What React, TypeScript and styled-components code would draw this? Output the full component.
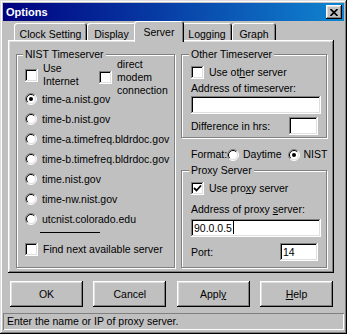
import React from "react";
import styled, { createGlobalStyle } from "styled-components";

const Global = createGlobalStyle`
  body {
    margin: 0;
    background: #c0c0c0;
  }
`;

const raised = `
  box-shadow: inset -1px -1px #000, inset 1px 1px #fff, inset -2px -2px #808080, inset 2px 2px #dfdfdf;
`;

const sunken = `
  box-shadow: inset -1px -1px #fff, inset 1px 1px #808080, inset -2px -2px #dfdfdf, inset 2px 2px #000;
`;

const Window = styled.div`
  width: 347px;
  height: 334px;
  box-sizing: border-box;
  padding: 3px;
  background: #c0c0c0;
  box-shadow: inset -1px -1px #000, inset 1px 1px #dfdfdf, inset -2px -2px #808080, inset 2px 2px #fff;
  display: flex;
  flex-direction: column;
  font: 10.5px "Liberation Sans", Arial, sans-serif;
  color: #000;
`;

const TitleBar = styled.div`
  height: 18px;
  display: flex;
  align-items: center;
  justify-content: space-between;
  padding: 0 2px 0 3px;
  background: linear-gradient(90deg, #000080, #1084d0);
  color: #fff;
  font-weight: bold;
  font-size: 11px;
`;

const CloseButton = styled.div`
  width: 16px;
  height: 14px;
  background: #c0c0c0;
  ${raised}
  display: flex;
  align-items: center;
  justify-content: center;
`;

const TabStrip = styled.div`
  height: 19px;
  display: flex;
  align-items: flex-end;
  padding-left: 11px;
`;

const Tab = styled.div<{ $w: number; $active?: boolean }>`
  position: relative;
  z-index: ${(p) => (p.$active ? 1 : 0)};
  box-sizing: border-box;
  width: ${(p) => (p.$active ? p.$w + 4 : p.$w)}px;
  height: ${(p) => (p.$active ? 21 : 17)}px;
  margin: ${(p) => (p.$active ? "0 -2px -2px" : "0")};
  padding-top: 5px;
  line-height: 12px;
  text-align: center;
  background: #c0c0c0;
  border-radius: 3px 3px 0 0;
  box-shadow: inset 1px 1px #fff, inset -1px 0 #000, inset -2px 0 #808080;
`;

const Panel = styled.div`
  width: 326px;
  height: 233px;
  box-sizing: border-box;
  margin-left: 5px;
  padding: 8px 7px 5px 8px;
  ${raised}
  display: grid;
  grid-template-columns: 159px 146px;
  column-gap: 6px;
`;

const Group = styled.fieldset<{ $h?: number; $pl: number }>`
  margin: 0;
  min-width: 0;
  box-sizing: border-box;
  height: ${(p) => (p.$h ? `${p.$h}px` : "auto")};
  border: 1px solid #808080;
  box-shadow: inset 1px 1px #fff, 1px 1px #fff;
  padding: 0 4px 0 ${(p) => p.$pl}px;
  display: flex;
  flex-direction: column;
`;

const Legend = styled.legend`
  margin-left: -2px;
  padding: 0 2px;
  line-height: 12px;
  background: #c0c0c0;
`;

const Column = styled.div`
  display: flex;
  flex-direction: column;
`;

const TopOptions = styled.div`
  height: 31px;
  margin-top: -2px;
  display: grid;
  grid-template-columns: 74px auto;
  align-items: start;
`;

const Check = styled.div<{ $top?: number }>`
  display: flex;
  align-items: center;
  gap: 5px;
  line-height: 13px;
  margin-top: ${(p) => p.$top ?? 0}px;
  white-space: nowrap;
`;

const Box = styled.span`
  width: 13px;
  height: 13px;
  flex: none;
  background: #fff;
  ${sunken}
  display: flex;
  align-items: center;
  justify-content: center;
`;

const RadioRow = styled.div`
  height: 20px;
  display: flex;
  align-items: center;
  gap: 5px;
  white-space: nowrap;
`;

const Rule = styled.div`
  width: 60px;
  height: 1px;
  margin: 3px 0 0 15px;
  background: #000;
`;

const Text = styled.div<{ $top?: number }>`
  line-height: 13px;
  margin-top: ${(p) => p.$top ?? 0}px;
  white-space: nowrap;
`;

const Field = styled.div<{ $w: number; $top?: number; $right?: number }>`
  width: ${(p) => p.$w}px;
  height: 18px;
  flex: none;
  box-sizing: border-box;
  margin-top: ${(p) => p.$top ?? 0}px;
  margin-right: ${(p) => p.$right ?? 0}px;
  padding-left: 3px;
  line-height: 18px;
  background: #fff;
  ${sunken}
`;

const Caret = styled.span`
  display: inline-block;
  width: 1px;
  height: 13px;
  margin-left: 1px;
  vertical-align: -2px;
  background: #000;
`;

const FieldRow = styled.div<{ $top: number }>`
  margin-top: ${(p) => p.$top}px;
  display: flex;
  align-items: center;
  justify-content: space-between;
  line-height: 13px;
`;

const FormatRow = styled.div`
  margin-top: 10px;
  padding-left: 10px;
  display: flex;
  align-items: center;
  line-height: 13px;
`;

const FormatLabel = styled.span`
  width: 36px;
`;

const Option = styled.span<{ $gap?: number }>`
  display: flex;
  align-items: center;
  gap: 4px;
  margin-left: ${(p) => p.$gap ?? 0}px;
`;

const ButtonRow = styled.div`
  margin: 8px 11px 0 7px;
  display: flex;
  justify-content: space-between;
`;

const Button = styled.button`
  width: 73px;
  height: 26px;
  padding: 0;
  border: none;
  background: #c0c0c0;
  ${raised}
  font: inherit;
  color: #000;
`;

const StatusBar = styled.div`
  margin-top: 6px;
  height: 17px;
  box-sizing: border-box;
  padding-left: 4px;
  line-height: 17px;
  box-shadow: inset 1px 1px #808080, inset -1px -1px #fff;
`;

const CheckBox = ({ checked }: { checked?: boolean }) => (
  <Box>
    {checked && (
      <svg width="9" height="9" viewBox="0 0 9 9">
        <polyline points="1,4 3.5,6.5 8,1.5" fill="none" stroke="#000" strokeWidth="1.8" />
      </svg>
    )}
  </Box>
);

const Radio = ({ checked }: { checked?: boolean }) => (
  <svg width="12" height="12" viewBox="0 0 12 12" style={{ flex: "none" }}>
    <circle cx="6" cy="6" r="5" fill="#fff" />
    <path d="M9.9 2.1 A5.5 5.5 0 0 0 2.1 9.9" fill="none" stroke="#808080" />
    <path d="M9.2 2.8 A4.5 4.5 0 0 0 2.8 9.2" fill="none" stroke="#000" />
    <path d="M9.9 2.1 A5.5 5.5 0 0 1 2.1 9.9" fill="none" stroke="#fff" />
    <path d="M9.2 2.8 A4.5 4.5 0 0 1 2.8 9.2" fill="none" stroke="#dfdfdf" />
    {checked && <circle cx="6" cy="6" r="2" fill="#000" />}
  </svg>
);

const servers = [
  "time-a.nist.gov",
  "time-b.nist.gov",
  "time-a.timefreq.bldrdoc.gov",
  "time-b.timefreq.bldrdoc.gov",
  "time.nist.gov",
  "time-nw.nist.gov",
  "utcnist.colorado.edu",
];

const tabs = [
  { label: "Clock Setting", w: 73 },
  { label: "Display", w: 49 },
  { label: "Server", w: 46, active: true },
  { label: "Logging", w: 50 },
  { label: "Graph", w: 44 },
];

export default function App() {
  return (
    <>
      <Global />
      <Window>
        <TitleBar>
          <span>Options</span>
          <CloseButton>
            <svg width="8" height="7" viewBox="0 0 8 7">
              <path d="M0.5 0 L7.5 7 M7.5 0 L0.5 7" stroke="#000" strokeWidth="1.6" />
            </svg>
          </CloseButton>
        </TitleBar>

        <TabStrip>
          {tabs.map((t) => (
            <Tab key={t.label} $w={t.w} $active={t.active}>
              {t.label}
            </Tab>
          ))}
        </TabStrip>

        <Panel>
          <Group $pl={8}>
            <Legend>NIST Timeserver</Legend>
            <TopOptions>
              <Check $top={4}>
                <CheckBox />
                <span>
                  Use
                  <br />
                  Internet
                </span>
              </Check>
              <Check>
                <CheckBox />
                <span>
                  direct
                  <br />
                  modem
                  <br />
                  connection
                </span>
              </Check>
            </TopOptions>
            {servers.map((s, i) => (
              <RadioRow key={s}>
                <Radio checked={i === 0} />
                <span>{s}</span>
              </RadioRow>
            ))}
            <Rule />
            <Check $top={10}>
              <CheckBox />
              <span>Find next available server</span>
            </Check>
          </Group>

          <Column>
            <Group $h={90} $pl={9}>
              <Legend>Other Timeserver</Legend>
              <Check $top={6}>
                <CheckBox />
                <span>
                  Use ot<u>h</u>er server
                </span>
              </Check>
              <Text $top={3}>Address of timeserver:</Text>
              <Field $w={130} $top={1} />
              <FieldRow $top={3}>
                <span>Difference in hrs:</span>
                <Field $w={29} $right={4} />
              </FieldRow>
            </Group>

            <FormatRow>
              <FormatLabel>Format:</FormatLabel>
              <Option>
                <Radio />
                Daytime
              </Option>
              <Option $gap={6}>
                <Radio checked />
                NIST
              </Option>
            </FormatRow>

            <Group $h={104} $pl={9} style={{ marginTop: 3 }}>
              <Legend>Proxy Server</Legend>
              <Check $top={6}>
                <CheckBox checked />
                <span>
                  Use pro<u>x</u>y server
                </span>
              </Check>
              <Text $top={8}>
                Address of proxy <u>s</u>erver:
              </Text>
              <Field $w={130} $top={3}>
                90.0.0.5
                <Caret />
              </Field>
              <FieldRow $top={6}>
                <span>Port:</span>
                <Field $w={38} $right={4}>
                  14
                </Field>
              </FieldRow>
            </Group>
          </Column>
        </Panel>

        <ButtonRow>
          <Button>OK</Button>
          <Button>Cancel</Button>
          <Button>
            Appl<u>y</u>
          </Button>
          <Button>
            <u>H</u>elp
          </Button>
        </ButtonRow>

        <StatusBar>Enter the name or IP of proxy server.</StatusBar>
      </Window>
    </>
  );
}
